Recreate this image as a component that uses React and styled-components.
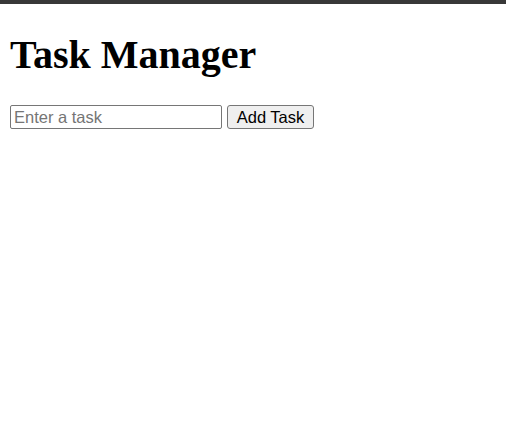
import React, { useState } from 'react'
import styled, { createGlobalStyle } from 'styled-components'

const GlobalStyle = createGlobalStyle`
  html, body {
    margin: 0;
    padding: 0;
    background: #ffffff;
  }
`

const TopBar = styled.div`
  height: 4px;
  background-color: #383838;
`

const Page = styled.div`
  padding: 0 10px;
`

const Title = styled.h1`
  font-family: "Liberation Serif", "Times New Roman", serif;
  font-size: 40px;
  font-weight: bold;
  color: #000;
  margin: 27px 0 27px 0;
`

const TaskForm = styled.form`
  display: flex;
  align-items: flex-start;
  gap: 5px;
`

const TaskInput = styled.input`
  box-sizing: border-box;
  width: 212px;
  height: 24px;
  padding: 1px 3px;
  border: 1px solid #767676;
  border-radius: 2px;
  font-family: "Liberation Sans", Arial, sans-serif;
  font-size: 16.5px;
  color: #000;
  outline: none;

  &::placeholder {
    color: #757575;
  }
`

const AddButton = styled.button`
  box-sizing: border-box;
  width: 87px;
  height: 24px;
  padding: 0;
  border: 1px solid #767676;
  border-radius: 3px;
  background-color: #efefef;
  font-family: "Liberation Sans", Arial, sans-serif;
  font-size: 16.5px;
  color: #000;
  cursor: pointer;
`

const TaskList = styled.ul`
  margin: 16px 0;
  padding-left: 40px;
  font-family: "Liberation Serif", "Times New Roman", serif;
`

export default function App() {
  const [text, setText] = useState('')
  const [tasks, setTasks] = useState([])

  const addTask = (e) => {
    e.preventDefault()
    if (!text.trim()) return
    setTasks([...tasks, text.trim()])
    setText('')
  }

  return (
    <>
      <GlobalStyle />
      <TopBar />
      <Page>
        <Title>Task Manager</Title>
        <TaskForm onSubmit={addTask}>
          <TaskInput
            placeholder="Enter a task"
            value={text}
            onChange={(e) => setText(e.target.value)}
          />
          <AddButton type="submit">Add Task</AddButton>
        </TaskForm>
        {tasks.length > 0 &&
        <TaskList>
          {tasks.map((task, index) => (
            <li key={index}>{task}</li>
          ))}
        </TaskList>
        }
      </Page>
    </>
  )
}
